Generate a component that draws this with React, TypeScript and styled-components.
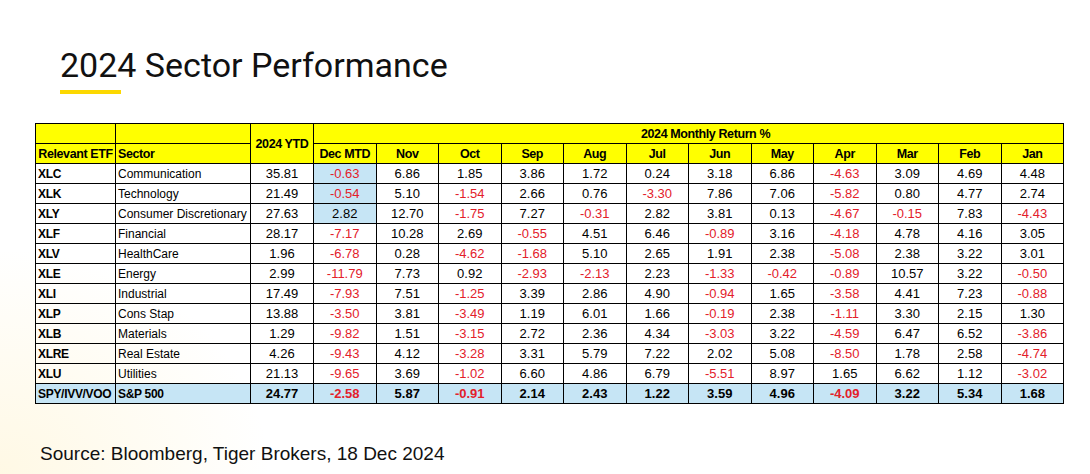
import React from "react";
import styled, {createGlobalStyle} from "styled-components";

const GlobalStyle = createGlobalStyle`
  html, body {
    margin: 0;
    padding: 0;
  }
  body {
    width: 1090px;
    height: 474px;
    overflow: hidden;
    background:
      radial-gradient(ellipse 360px 300px at 0% 100%, rgba(255, 232, 160, 0.28), rgba(255, 255, 255, 0) 75%),
      #ffffff;
    font-family: "Liberation Sans", Arial, sans-serif;
  }
`;

const Page = styled.div`
  display: flex;
  flex-direction: column;
  padding-top: 45px;
`;

const Title = styled.h1`
  margin: 0 0 0 60px;
  font-family: Roboto, "Liberation Sans", sans-serif;
  font-weight: 400;
  font-size: 34px;
  line-height: 40px;
  color: #111;
`;

const Underline = styled.div`
  margin: 5px 0 0 60px;
  width: 61px;
  height: 4px;
  background: #fcd800;
`;

const Table = styled.table`
  margin: 29px 0 0 35px;
  width: 1028px;
  border-collapse: collapse;
  table-layout: fixed;
  font-family: "Liberation Sans", Arial, sans-serif;
  color: #000;
`;

const Row = styled.tr<{ $total?: boolean }>`
  height: 20px;
  background: ${p => (p.$total ? "#c6e5f5" : "transparent")};
`;

const HeadCell = styled.th<{ $left?: boolean; $shift?: number }>`
  border: 1px solid #000;
  background: #ffff00;
  padding: 0 2px 0 ${p => (p.$shift ?? 2)}px;
  font-size: 12.5px;
  font-weight: 700;
  letter-spacing: -0.4px;
  text-align: ${p => (p.$left ? "left" : "center")};
  white-space: nowrap;
  overflow: hidden;
  line-height: 18px;
`;

const Cell = styled.td<{ $neg?: boolean; $hl?: boolean; $bold?: boolean; $left?: boolean }>`
  border: 1px solid #000;
  padding: 0 2px;
  font-size: ${p => (p.$left ? "12px" : "13px")};
  font-weight: ${p => (p.$bold ? 700 : 400)};
  letter-spacing: ${p => (p.$left && p.$bold ? "-0.3px" : "0")};
  color: ${p => (p.$neg ? "#e3202a" : "#000")};
  background: ${p => (p.$hl ? "#c6e5f5" : "transparent")};
  text-align: ${p => (p.$left ? "left" : "center")};
  white-space: nowrap;
  overflow: hidden;
  line-height: 18px;
`;

const Source = styled.div`
  margin: 39px 0 0 40px;
  font-family: "Liberation Sans", Arial, sans-serif;
  font-size: 19px;
  color: #111;
`;

const months = ["Dec MTD", "Nov", "Oct", "Sep", "Aug", "Jul", "Jun", "May", "Apr", "Mar", "Feb", "Jan"];

type Line = { etf: string; sector: string; ytd: string; m: string[] };

const lines: Line[] = [
  {etf: "XLC", sector: "Communication", ytd: "35.81", m: ["-0.63", "6.86", "1.85", "3.86", "1.72", "0.24", "3.18", "6.86", "-4.63", "3.09", "4.69", "4.48"]},
  {etf: "XLK", sector: "Technology", ytd: "21.49", m: ["-0.54", "5.10", "-1.54", "2.66", "0.76", "-3.30", "7.86", "7.06", "-5.82", "0.80", "4.77", "2.74"]},
  {etf: "XLY", sector: "Consumer Discretionary", ytd: "27.63", m: ["2.82", "12.70", "-1.75", "7.27", "-0.31", "2.82", "3.81", "0.13", "-4.67", "-0.15", "7.83", "-4.43"]},
  {etf: "XLF", sector: "Financial", ytd: "28.17", m: ["-7.17", "10.28", "2.69", "-0.55", "4.51", "6.46", "-0.89", "3.16", "-4.18", "4.78", "4.16", "3.05"]},
  {etf: "XLV", sector: "HealthCare", ytd: "1.96", m: ["-6.78", "0.28", "-4.62", "-1.68", "5.10", "2.65", "1.91", "2.38", "-5.08", "2.38", "3.22", "3.01"]},
  {etf: "XLE", sector: "Energy", ytd: "2.99", m: ["-11.79", "7.73", "0.92", "-2.93", "-2.13", "2.23", "-1.33", "-0.42", "-0.89", "10.57", "3.22", "-0.50"]},
  {etf: "XLI", sector: "Industrial", ytd: "17.49", m: ["-7.93", "7.51", "-1.25", "3.39", "2.86", "4.90", "-0.94", "1.65", "-3.58", "4.41", "7.23", "-0.88"]},
  {etf: "XLP", sector: "Cons Stap", ytd: "13.88", m: ["-3.50", "3.81", "-3.49", "1.19", "6.01", "1.66", "-0.19", "2.38", "-1.11", "3.30", "2.15", "1.30"]},
  {etf: "XLB", sector: "Materials", ytd: "1.29", m: ["-9.82", "1.51", "-3.15", "2.72", "2.36", "4.34", "-3.03", "3.22", "-4.59", "6.47", "6.52", "-3.86"]},
  {etf: "XLRE", sector: "Real Estate", ytd: "4.26", m: ["-9.43", "4.12", "-3.28", "3.31", "5.79", "7.22", "2.02", "5.08", "-8.50", "1.78", "2.58", "-4.74"]},
  {etf: "XLU", sector: "Utilities", ytd: "21.13", m: ["-9.65", "3.69", "-1.02", "6.60", "4.86", "6.79", "-5.51", "8.97", "1.65", "6.62", "1.12", "-3.02"]},
];

const total: Line = {etf: "SPY/IVV/VOO", sector: "S&P 500", ytd: "24.77", m: ["-2.58", "5.87", "-0.91", "2.14", "2.43", "1.22", "3.59", "4.96", "-4.09", "3.22", "5.34", "1.68"]};

const isNeg = (v: string) => v.startsWith("-");

const App = () => {
  return (
    <>
      <GlobalStyle/>
      <Page>
        <Title>2024 Sector Performance</Title>
        <Underline/>
        <Table>
          <colgroup>
            <col style={{width: 80}}/>
            <col style={{width: 135}}/>
            <col style={{width: 63}}/>
            {months.map(m => <col key={m} style={{width: 62.5}}/>)}
          </colgroup>
          <thead>
            <Row>
              <HeadCell/>
              <HeadCell/>
              <HeadCell rowSpan={2}>2024 YTD</HeadCell>
              <HeadCell colSpan={12} $shift={36}>2024 Monthly Return %</HeadCell>
            </Row>
            <Row>
              <HeadCell>Relevant ETF</HeadCell>
              <HeadCell $left>Sector</HeadCell>
              {months.map(m => <HeadCell key={m}>{m}</HeadCell>)}
            </Row>
          </thead>
          <tbody>
            {lines.map((row, i) => (
              <Row key={row.etf}>
                <Cell $left $bold>{row.etf}</Cell>
                <Cell $left>{row.sector}</Cell>
                <Cell>{row.ytd}</Cell>
                {row.m.map((v, j) => (
                  <Cell key={j} $neg={isNeg(v)} $hl={j === 0 && i < 3}>{v}</Cell>
                ))}
              </Row>
            ))}
            <Row $total>
              <Cell $left $bold>{total.etf}</Cell>
              <Cell $left $bold>{total.sector}</Cell>
              <Cell $bold>{total.ytd}</Cell>
              {total.m.map((v, j) => (
                <Cell key={j} $bold $neg={isNeg(v)}>{v}</Cell>
              ))}
            </Row>
          </tbody>
        </Table>
        <Source>Source: Bloomberg, Tiger Brokers, 18 Dec 2024</Source>
      </Page>
    </>
  );
};

export default App;
